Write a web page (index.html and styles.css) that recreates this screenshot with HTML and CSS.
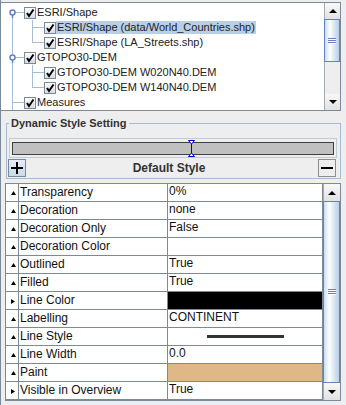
FILE: index.html
```html
<!DOCTYPE html>
<html>
<head>
<meta charset="utf-8">
<link rel="stylesheet" href="styles.css">
</head>
<body>

<div class="tree-pane">
  <div class="tree">
    <div class="node">
      <svg class="gut" width="20" height="15"><path class="ln" d="M8.5 9V15M10 7.5H20"/><circle class="knob" cx="8.5" cy="7.5" r="2.5"/><path class="stem" d="M8.5 10v3"/></svg>
      <span class="chk"><svg width="10" height="10"><path d="M2 5l2 3 4.5-6.5"/></svg></span>
      <span class="label">ESRI/Shape</span>
    </div>
    <div class="node">
      <svg class="gut" width="20" height="15"><path class="ln" d="M8.5 0V15"/></svg>
      <svg class="gut" width="20" height="15"><path class="ln" d="M8.5 0V15M9 7.5H20"/></svg>
      <span class="chk"><svg width="10" height="10"><path d="M2 5l2 3 4.5-6.5"/></svg></span>
      <span class="label sel">ESRI/Shape (data/World_Countries.shp)</span>
    </div>
    <div class="node">
      <svg class="gut" width="20" height="15"><path class="ln" d="M8.5 0V15"/></svg>
      <svg class="gut" width="20" height="15"><path class="ln" d="M8.5 0V8M9 7.5H20"/></svg>
      <span class="chk"><svg width="10" height="10"><path d="M2 5l2 3 4.5-6.5"/></svg></span>
      <span class="label">ESRI/Shape (LA_Streets.shp)</span>
    </div>
    <div class="node">
      <svg class="gut" width="20" height="15"><path class="ln" d="M8.5 0V5M8.5 9V15M10 7.5H20"/><circle class="knob" cx="8.5" cy="7.5" r="2.5"/><path class="stem" d="M8.5 10v3"/></svg>
      <span class="chk"><svg width="10" height="10"><path d="M2 5l2 3 4.5-6.5"/></svg></span>
      <span class="label">GTOPO30-DEM</span>
    </div>
    <div class="node">
      <svg class="gut" width="20" height="15"><path class="ln" d="M8.5 0V15"/></svg>
      <svg class="gut" width="20" height="15"><path class="ln" d="M8.5 0V15M9 7.5H20"/></svg>
      <span class="chk"><svg width="10" height="10"><path d="M2 5l2 3 4.5-6.5"/></svg></span>
      <span class="label">GTOPO30-DEM W020N40.DEM</span>
    </div>
    <div class="node">
      <svg class="gut" width="20" height="15"><path class="ln" d="M8.5 0V15"/></svg>
      <svg class="gut" width="20" height="15"><path class="ln" d="M8.5 0V8M9 7.5H20"/></svg>
      <span class="chk"><svg width="10" height="10"><path d="M2 5l2 3 4.5-6.5"/></svg></span>
      <span class="label">GTOPO30-DEM W140N40.DEM</span>
    </div>
    <div class="node">
      <svg class="gut" width="20" height="15"><path class="ln" d="M8.5 0V15M9 7.5H20"/></svg>
      <span class="chk"><svg width="10" height="10"><path d="M2 5l2 3 4.5-6.5"/></svg></span>
      <span class="label">Measures</span>
    </div>
  </div>
  <div class="vscroll">
    <div class="sb-btn"><span class="tri-up"></span></div>
    <div class="track"><div class="thumb tree-thumb"><span class="grip"></span></div></div>
    <div class="sb-btn"><span class="tri-down"></span></div>
  </div>
</div>

<fieldset class="style-box">
  <legend>Dynamic Style Setting</legend>
  <div class="slider">
    <div class="slider-bar">
      <svg class="marker" width="7" height="17"><path d="M0.5 0.5H6.5L3.5 4ZM0.5 16.5H6.5L3.5 13Z"/><path d="M3.5 4V13"/></svg>
    </div>
  </div>
  <div class="style-row">
    <button class="btn-plus" type="button"><svg width="12" height="12"><path d="M6 0V12M0 6H12"/></svg></button>
    <span class="style-name">Default Style</span>
    <button class="btn-minus" type="button"><svg width="12" height="12"><path d="M0 6H12"/></svg></button>
  </div>
</fieldset>

<div class="prop-pane">
  <div class="props">
    <div class="prop"><span class="toggle"><svg class="up" width="5" height="4"><path d="M0 4H5L2.5 0Z"/></svg></span><span class="name">Transparency</span><span class="value">0%</span></div>
    <div class="prop"><span class="toggle"><svg class="up" width="5" height="4"><path d="M0 4H5L2.5 0Z"/></svg></span><span class="name">Decoration</span><span class="value">none</span></div>
    <div class="prop"><span class="toggle"><svg class="up" width="5" height="4"><path d="M0 4H5L2.5 0Z"/></svg></span><span class="name">Decoration Only</span><span class="value">False</span></div>
    <div class="prop"><span class="toggle"><svg class="up" width="5" height="4"><path d="M0 4H5L2.5 0Z"/></svg></span><span class="name">Decoration Color</span><span class="value"></span></div>
    <div class="prop"><span class="toggle"><svg class="up" width="5" height="4"><path d="M0 4H5L2.5 0Z"/></svg></span><span class="name">Outlined</span><span class="value">True</span></div>
    <div class="prop"><span class="toggle"><svg class="up" width="5" height="4"><path d="M0 4H5L2.5 0Z"/></svg></span><span class="name">Filled</span><span class="value">True</span></div>
    <div class="prop"><span class="toggle"><svg class="right" width="4" height="5"><path d="M0 0V5L4 2.5Z"/></svg></span><span class="name">Line Color</span><span class="value swatch-black"></span></div>
    <div class="prop"><span class="toggle"><svg class="up" width="5" height="4"><path d="M0 4H5L2.5 0Z"/></svg></span><span class="name">Labelling</span><span class="value">CONTINENT</span></div>
    <div class="prop"><span class="toggle"><svg class="up" width="5" height="4"><path d="M0 4H5L2.5 0Z"/></svg></span><span class="name">Line Style</span><span class="value line-style"><span class="dash"></span></span></div>
    <div class="prop"><span class="toggle"><svg class="up" width="5" height="4"><path d="M0 4H5L2.5 0Z"/></svg></span><span class="name">Line Width</span><span class="value">0.0</span></div>
    <div class="prop"><span class="toggle"><svg class="up" width="5" height="4"><path d="M0 4H5L2.5 0Z"/></svg></span><span class="name">Paint</span><span class="value swatch-paint"></span></div>
    <div class="prop"><span class="toggle"><svg class="right" width="4" height="5"><path d="M0 0V5L4 2.5Z"/></svg></span><span class="name">Visible in Overview</span><span class="value">True</span></div>
  </div>
  <div class="vscroll wide">
    <div class="sb-btn tall"><span class="tri-up"></span></div>
    <div class="track"><div class="thumb full"><span class="grip"></span></div></div>
    <div class="sb-btn tall"><span class="tri-down"></span></div>
  </div>
</div>

</body>
</html>
```

FILE: styles.css
```css
html, body {
  margin: 0;
}

body {
  box-sizing: border-box;
  height: 405px;
  padding-top: 2px;
  background-color: #EEEEEE;
  border-left: 1px solid #7A8A99;
  font-family: "Liberation Sans", Arial, sans-serif;
  color: #222;
  overflow: hidden;
}

/* layer tree */
.tree-pane {
  display: flex;
  box-sizing: border-box;
  height: 109px;
  margin-right: 5px;
  border: 1px solid #7A8A99;
  border-left: none;
  background: #FFFFFF;
}

.tree {
  flex: 1;
  padding: 2px 0 0 3px;
  overflow: hidden;
}

.node {
  display: flex;
  align-items: center;
  height: 15px;
}

.gut {
  display: block;
  flex: none;
}

.gut .ln {
  stroke: #A8BED6;
  stroke-width: 1;
  fill: none;
}

.gut .knob {
  fill: #FFFFFF;
  stroke: #6382BF;
  stroke-width: 1.5;
}

.gut .stem {
  stroke: #6382BF;
  stroke-width: 1.5;
}

.chk {
  display: flex;
  align-items: center;
  justify-content: center;
  flex: none;
  box-sizing: border-box;
  width: 12px;
  height: 12px;
  border: 1px solid #7A8A99;
  background: linear-gradient(#FFFFFF, #D6DCE3);
}

.chk svg path {
  fill: none;
  stroke: #000;
  stroke-width: 2;
}

.label {
  padding: 0 1px;
  font-size: 11px;
  line-height: 13px;
  white-space: nowrap;
}

.label.sel {
  background: #B8CFE5;
}

/* scroll bars */
.vscroll {
  display: flex;
  flex-direction: column;
  flex: none;
  width: 16px;
  background: #EEEEEE;
}

.vscroll.wide {
  width: 17px;
}

.sb-btn {
  display: flex;
  align-items: center;
  justify-content: center;
  flex: none;
  box-sizing: border-box;
  height: 16px;
  border-left: 1px solid #A3ABB4;
  background: linear-gradient(#F8F8F8, #E2E2E2);
}

.sb-btn.tall {
  height: 17px;
}

.tri-up {
  width: 0;
  height: 0;
  border-left: 4px solid transparent;
  border-right: 4px solid transparent;
  border-bottom: 4px solid #000;
}

.tri-down {
  width: 0;
  height: 0;
  border-left: 4px solid transparent;
  border-right: 4px solid transparent;
  border-top: 4px solid #000;
}

.track {
  flex: 1;
  display: flex;
  flex-direction: column;
  border-left: 1px solid #A3ABB4;
}

.thumb {
  display: flex;
  align-items: center;
  justify-content: center;
  box-sizing: border-box;
  margin-left: -1px;
  border: 1px solid #6382BF;
  background: linear-gradient(to right, #C8DDF2 0%, #FFFFFF 35%, #DDE8F3 65%, #B8CFE5 100%);
}

.tree-thumb {
  height: 43px;
}

.thumb.full {
  flex: 1;
}

.grip {
  width: 8px;
  height: 6px;
  background: repeating-linear-gradient(#6382BF 0 1px, #FFFFFF 1px 2px);
}

/* dynamic style box */
.style-box {
  margin: 6px 5px 0 5px;
  padding: 0 3px 1px 2px;
  border: 1px solid #A8BBD0;
  min-width: 0;
}

.style-box legend {
  padding: 0 2px;
  font-size: 11px;
  font-weight: bold;
  line-height: 13px;
  color: #333;
}

.slider {
  margin-top: 8px;
  padding: 3px 2px 2px 2px;
  border: 1px solid #C2CCD6;
}

.slider-bar {
  position: relative;
  box-sizing: border-box;
  height: 13px;
  border: 1px solid #404040;
  background: #C0C0C0;
}

.marker {
  position: absolute;
  left: 175px;
  top: -3px;
}

.marker path {
  fill: #FFFFFF;
  stroke: #0000C8;
  stroke-width: 1;
}

.style-row {
  display: flex;
  align-items: center;
  height: 18px;
  margin: 1px 1px 0 -1px;
}

.btn-plus, .btn-minus {
  display: flex;
  align-items: center;
  justify-content: center;
  flex: none;
  box-sizing: border-box;
  width: 18px;
  height: 18px;
  padding: 0;
}

.btn-plus {
  border: 1px solid #7A8A99;
  background: linear-gradient(#E4EDF6, #C9DAEA);
}

.btn-minus {
  border: 1px solid #8E8E8E;
  background: #EEEEEE;
}

.btn-plus path, .btn-minus path {
  stroke: #000;
  stroke-width: 2;
}

.style-name {
  flex: 1;
  padding-right: 6px;
  text-align: center;
  font-size: 12px;
  font-weight: bold;
  color: #333;
}

/* property table */
.prop-pane {
  display: flex;
  margin: 4px 5px 0 4px;
  border: 1px solid #7A8A99;
  background: #FFFFFF;
}

.props {
  flex: 1;
}

.prop {
  display: flex;
  box-sizing: border-box;
  height: 18px;
  border-bottom: 1px solid #7A8A99;
  font-size: 12px;
  color: #111;
}

.prop > span {
  border-right: 1px solid #7A8A99;
}

.toggle {
  display: flex;
  align-items: center;
  justify-content: center;
  flex: none;
  width: 13px;
  padding-left: 2px;
  box-sizing: border-box;
}

.toggle svg {
  display: block;
  margin-top: 1px;
}

.toggle path {
  fill: #000;
}

.name {
  flex: none;
  width: 147px;
  padding-left: 1px;
  line-height: 17px;
  white-space: nowrap;
}

.value {
  flex: 1;
  padding: 0 1px;
  line-height: 14px;
  white-space: nowrap;
}

.swatch-black {
  background: #000000;
}

.swatch-paint {
  background: #DEB887;
}

.line-style {
  display: flex;
  align-items: center;
  justify-content: center;
}

.dash {
  width: 77px;
  height: 3px;
  background: #333333;
}
```
